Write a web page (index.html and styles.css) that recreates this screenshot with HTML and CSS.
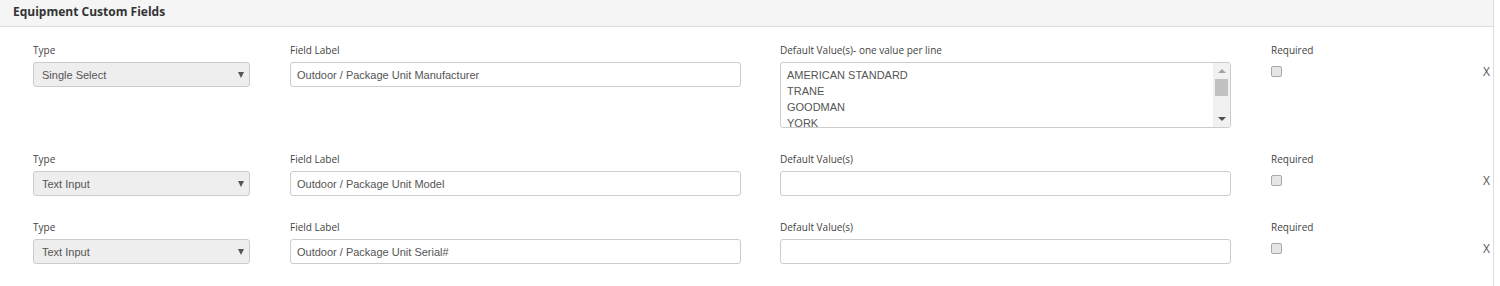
FILE: index.html
```html
<!DOCTYPE html>
<html lang="en">
<head>
    <title>Equipment Custom Fields</title>
    <link rel="stylesheet" href="styles.css">
</head>
<body>
<div class="panel">
    <div class="panel_heading">Equipment Custom Fields</div>

    <div class="panel_body">
        <div class="field_row">
            <div class="col col_type">
                <label class="field_label">Type</label>
                <div class="select_box">Single Select<span class="caret"></span></div>
            </div>
            <div class="col col_label">
                <label class="field_label">Field Label</label>
                <div class="text_box">Outdoor / Package Unit Manufacturer</div>
            </div>
            <div class="col col_default">
                <label class="field_label">Default Value(s)- one value per line</label>
                <div class="area_box">
                    <div class="area_text">
                        <div>AMERICAN STANDARD</div>
                        <div>TRANE</div>
                        <div>GOODMAN</div>
                        <div>YORK</div>
                    </div>
                    <div class="scrollbar">
                        <span class="arrow_up"></span>
                        <span class="thumb"></span>
                        <span class="arrow_down"></span>
                    </div>
                </div>
            </div>
            <div class="col col_required">
                <label class="field_label">Required</label>
                <span class="check_box"></span>
            </div>
            <div class="col col_remove">
                <span class="remove">X</span>
            </div>
        </div>

        <div class="field_row">
            <div class="col col_type">
                <label class="field_label">Type</label>
                <div class="select_box">Text Input<span class="caret"></span></div>
            </div>
            <div class="col col_label">
                <label class="field_label">Field Label</label>
                <div class="text_box">Outdoor / Package Unit Model</div>
            </div>
            <div class="col col_default">
                <label class="field_label">Default Value(s)</label>
                <div class="text_box"></div>
            </div>
            <div class="col col_required">
                <label class="field_label">Required</label>
                <span class="check_box"></span>
            </div>
            <div class="col col_remove">
                <span class="remove">X</span>
            </div>
        </div>

        <div class="field_row">
            <div class="col col_type">
                <label class="field_label">Type</label>
                <div class="select_box">Text Input<span class="caret"></span></div>
            </div>
            <div class="col col_label">
                <label class="field_label">Field Label</label>
                <div class="text_box">Outdoor / Package Unit Serial#</div>
            </div>
            <div class="col col_default">
                <label class="field_label">Default Value(s)</label>
                <div class="text_box"></div>
            </div>
            <div class="col col_required">
                <label class="field_label">Required</label>
                <span class="check_box"></span>
            </div>
            <div class="col col_remove">
                <span class="remove">X</span>
            </div>
        </div>
    </div>
</div>
</body>
</html>
```

FILE: styles.css
```css
body{
    margin:0;
    background-color:white;
    font-family:"Open Sans", sans-serif;
    color:#444;
}

.panel{
    width:1493px;
    height:286px;
    border-right:1px solid #ddd;
}

.panel_heading{
    height:26px;
    line-height:24px;
    padding-left:13px;
    background-color:#f5f5f5;
    border-bottom:1px solid #ddd;
    font-size:12px;
    font-weight:bold;
    color:#333;
}

.panel_body{
    padding-top:16px;
    padding-left:33px;
    padding-right:2px;
}

.field_row{
    display:flex;
    flex-direction:row;
    margin-bottom:24px;
}

.col{
    display:flex;
    flex-direction:column;
}

.col_type{
    width:217px;
    margin-right:40px;
}

.col_label{
    width:451px;
    margin-right:39px;
}

.col_default{
    width:451px;
    margin-right:40px;
}

.col_required{
    flex:1;
}

.col_remove{
    padding-top:16px;
}

.field_label{
    display:block;
    font-size:10px;
    line-height:14px;
    height:14px;
    margin-bottom:5px;
    color:#444;
}

.select_box,
.text_box,
.area_box{
    box-sizing:border-box;
    border:1px solid #ccc;
    border-radius:3px;
    font-family:"Liberation Sans", Arial, sans-serif;
    font-size:11px;
    color:#555;
}

.select_box{
    height:25px;
    line-height:24px;
    padding-left:8px;
    background-color:#eee;
    display:flex;
    justify-content:space-between;
    align-items:center;
    padding-right:5px;
}

.caret{
    width:0;
    height:0;
    border-left:3px solid transparent;
    border-right:3px solid transparent;
    border-top:6px solid #555;
}

.text_box{
    height:25px;
    line-height:24px;
    padding-left:6px;
    background-color:white;
}

.area_box{
    height:66px;
    display:flex;
    flex-direction:row;
    overflow:hidden;
    background-color:white;
}

.area_text{
    flex:1;
    padding-top:4px;
    padding-left:6px;
    line-height:16px;
    overflow:hidden;
}

.scrollbar{
    width:17px;
    background-color:#f1f1f1;
    display:flex;
    flex-direction:column;
    align-items:center;
}

.arrow_up{
    margin-top:6px;
    width:0;
    height:0;
    border-left:4px solid transparent;
    border-right:4px solid transparent;
    border-bottom:4px solid #a3a3a3;
}

.thumb{
    margin-top:6px;
    width:13px;
    height:17px;
    background-color:#c1c1c1;
}

.arrow_down{
    margin-top:auto;
    margin-bottom:6px;
    width:0;
    height:0;
    border-left:4px solid transparent;
    border-right:4px solid transparent;
    border-top:4px solid #505050;
}

.check_box{
    box-sizing:border-box;
    display:block;
    width:11px;
    height:11px;
    margin-top:4px;
    border:1px solid #a9a9a9;
    border-radius:2px;
    background-color:#e6e6e6;
}

.remove{
    display:block;
    width:8px;
    line-height:25px;
    font-size:12px;
    color:#555;
}
```
